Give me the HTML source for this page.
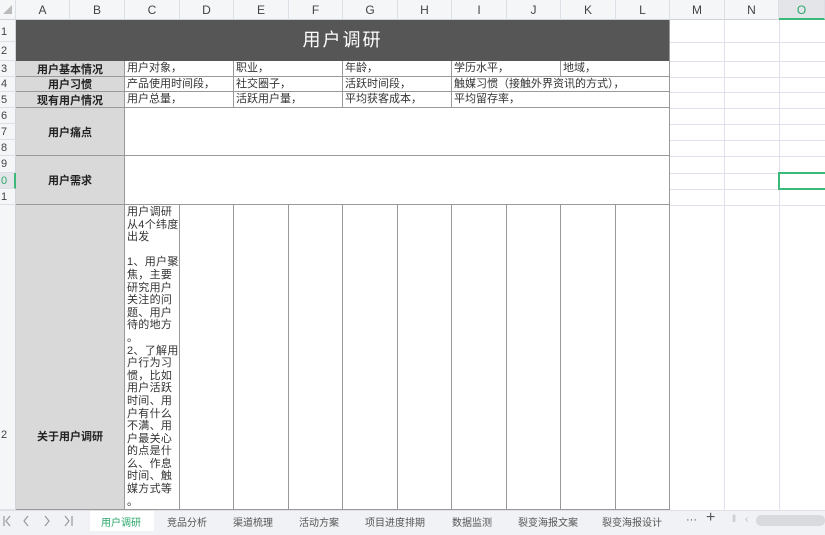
<!DOCTYPE html>
<html><head><meta charset="utf-8"><style>
*{margin:0;padding:0;box-sizing:border-box}
html,body{width:825px;height:535px;overflow:hidden}
body{background:#fff;font-family:"Liberation Sans","Noto Sans CJK SC",sans-serif;position:relative}
.a{position:absolute}
.ch{position:absolute;top:0;height:20px;background:#f5f6f8;border-right:1px solid #dcdfe6;border-bottom:1px solid #d0d3da;font-size:12px;color:#444;text-align:center;line-height:20px}
.rh{position:absolute;left:0;width:16px;background:#f5f6f8;border-bottom:1px solid #dcdfe6;border-right:1px solid #d0d3da;font-size:11px;color:#444;text-align:left;padding-left:1px}
.hl{position:absolute;height:1px;background:#dfe2ec}
.vl{position:absolute;width:1px;background:#dfe2ec}
.c{position:absolute;border-right:1px solid #999;border-bottom:1px solid #999;font-size:11px;color:#333;white-space:nowrap;overflow:hidden;padding-left:2px}
.lab{position:absolute;background:#d9d9d9;border-right:1px solid #999;border-bottom:1px solid #999;font-size:11px;font-weight:bold;color:#222;text-align:center;display:flex;align-items:center;justify-content:center}
.tab{position:absolute;top:514px;font-size:10px;color:#555}
</style></head><body>
<div class="hl" style="left:670px;top:42px;width:155px"></div>
<div class="hl" style="left:670px;top:61px;width:155px"></div>
<div class="hl" style="left:670px;top:77px;width:155px"></div>
<div class="hl" style="left:670px;top:92px;width:155px"></div>
<div class="hl" style="left:670px;top:108px;width:155px"></div>
<div class="hl" style="left:670px;top:124px;width:155px"></div>
<div class="hl" style="left:670px;top:140px;width:155px"></div>
<div class="hl" style="left:670px;top:156px;width:155px"></div>
<div class="hl" style="left:670px;top:173px;width:155px"></div>
<div class="hl" style="left:670px;top:189px;width:155px"></div>
<div class="hl" style="left:670px;top:205px;width:155px"></div>
<div class="vl" style="left:724px;top:20px;height:490px"></div>
<div class="vl" style="left:779px;top:20px;height:490px"></div>
<div class="ch" style="left:0;width:16px;color:#bbb;font-size:9px">◢</div>
<div class="ch" style="left:16px;width:54px">A</div>
<div class="ch" style="left:70px;width:55px">B</div>
<div class="ch" style="left:125px;width:55px">C</div>
<div class="ch" style="left:180px;width:54px">D</div>
<div class="ch" style="left:234px;width:55px">E</div>
<div class="ch" style="left:289px;width:54px">F</div>
<div class="ch" style="left:343px;width:55px">G</div>
<div class="ch" style="left:398px;width:54px">H</div>
<div class="ch" style="left:452px;width:55px">I</div>
<div class="ch" style="left:507px;width:54px">J</div>
<div class="ch" style="left:561px;width:55px">K</div>
<div class="ch" style="left:616px;width:54px">L</div>
<div class="ch" style="left:670px;width:55px">M</div>
<div class="ch" style="left:725px;width:54px">N</div>
<div class="ch" style="left:779px;width:46px;background:#e3e5e9;color:#2aa76a;border-bottom:2px solid #3cb878">O</div>
<div class="rh" style="top:20px;height:22px;line-height:24px">1</div>
<div class="rh" style="top:42px;height:19px;line-height:18px">2</div>
<div class="rh" style="top:61px;height:16px;line-height:16px">3</div>
<div class="rh" style="top:77px;height:15px;line-height:15px">4</div>
<div class="rh" style="top:92px;height:16px;line-height:16px">5</div>
<div class="rh" style="top:108px;height:16px;line-height:16px">6</div>
<div class="rh" style="top:124px;height:16px;line-height:16px">7</div>
<div class="rh" style="top:140px;height:16px;line-height:16px">8</div>
<div class="rh" style="top:156px;height:17px;line-height:17px">9</div>
<div class="rh" style="top:173px;height:16px;line-height:16px;color:#2aa76a;border-right:2px solid #3cb878;background:#e3e5e9">0</div>
<div class="rh" style="top:189px;height:16px;line-height:16px">1</div>
<div class="rh" style="top:205px;height:305px;line-height:460px">2</div>
<div class="a" style="left:16px;top:20px;width:654px;height:41px;background:#565656;border-right:1px solid #999;color:#fff;font-size:18px;text-align:center;line-height:41px;letter-spacing:2px">用户调研</div>
<div class="lab" style="left:16px;top:61px;width:109px;height:16px">用户基本情况</div>
<div class="lab" style="left:16px;top:77px;width:109px;height:15px">用户习惯</div>
<div class="lab" style="left:16px;top:92px;width:109px;height:16px">现有用户情况</div>
<div class="lab" style="left:16px;top:108px;width:109px;height:48px">用户痛点</div>
<div class="lab" style="left:16px;top:156px;width:109px;height:49px">用户需求</div>
<div class="lab" style="left:16px;top:205px;width:109px;height:305px;align-items:flex-start;padding-top:223px">关于用户调研</div>
<div class="c" style="left:125px;top:61px;width:109px;height:16px;line-height:15px">用户对象，</div>
<div class="c" style="left:234px;top:61px;width:109px;height:16px;line-height:15px">职业，</div>
<div class="c" style="left:343px;top:61px;width:109px;height:16px;line-height:15px">年龄，</div>
<div class="c" style="left:452px;top:61px;width:109px;height:16px;line-height:15px">学历水平，</div>
<div class="c" style="left:561px;top:61px;width:109px;height:16px;line-height:15px">地域，</div>
<div class="c" style="left:125px;top:77px;width:109px;height:15px;line-height:14px">产品使用时间段，</div>
<div class="c" style="left:234px;top:77px;width:109px;height:15px;line-height:14px">社交圈子，</div>
<div class="c" style="left:343px;top:77px;width:109px;height:15px;line-height:14px">活跃时间段，</div>
<div class="c" style="left:452px;top:77px;width:218px;height:15px;line-height:14px">触媒习惯（接触外界资讯的方式），</div>
<div class="c" style="left:125px;top:92px;width:109px;height:16px;line-height:15px">用户总量，</div>
<div class="c" style="left:234px;top:92px;width:109px;height:16px;line-height:15px">活跃用户量，</div>
<div class="c" style="left:343px;top:92px;width:109px;height:16px;line-height:15px">平均获客成本，</div>
<div class="c" style="left:452px;top:92px;width:218px;height:16px;line-height:15px">平均留存率，</div>
<div class="c" style="left:125px;top:108px;width:545px;height:48px"></div>
<div class="c" style="left:125px;top:156px;width:545px;height:49px"></div>
<div class="c" style="left:125px;top:205px;width:55px;height:305px;white-space:normal;line-height:12.6px;font-size:11px;padding-top:1px;letter-spacing:0.3px">用户调研<br>从4个纬度<br>出发<br><br>1、用户聚<br>焦，主要<br>研究用户<br>关注的问<br>题、用户<br>待的地方<br>。<br>2、了解用<br>户行为习<br>惯，比如<br>用户活跃<br>时间、用<br>户有什么<br>不满、用<br>户最关心<br>的点是什<br>么、作息<br>时间、触<br>媒方式等<br>。</div>
<div class="c" style="left:180px;top:205px;width:54px;height:305px"></div>
<div class="c" style="left:234px;top:205px;width:55px;height:305px"></div>
<div class="c" style="left:289px;top:205px;width:54px;height:305px"></div>
<div class="c" style="left:343px;top:205px;width:55px;height:305px"></div>
<div class="c" style="left:398px;top:205px;width:54px;height:305px"></div>
<div class="c" style="left:452px;top:205px;width:55px;height:305px"></div>
<div class="c" style="left:507px;top:205px;width:54px;height:305px"></div>
<div class="c" style="left:561px;top:205px;width:55px;height:305px"></div>
<div class="c" style="left:616px;top:205px;width:54px;height:305px"></div>
<div class="a" style="left:778px;top:172px;width:50px;height:18px;border:2px solid #3cb878"></div>
<div class="a" style="left:0;top:510px;width:825px;height:25px;background:#f1f2f5;border-top:1px solid #e0e2e6"></div>
<svg class="a" style="left:0;top:512px" width="80" height="18" viewBox="0 0 80 18" fill="none" stroke="#999" stroke-width="1.2">
<path d="M4 4v10M10 4l-4 5 4 5"/>
<path d="M28 4l-4 5 4 5"/>
<path d="M45 4l4 5-4 5"/>
<path d="M65 4l4 5-4 5M72 4v10"/>
</svg>
<div class="a" style="left:90px;top:511px;width:64px;height:20px;background:#fff"></div>
<div class="tab" style="left:101px;color:#2aa76a">用户调研</div>
<div class="tab" style="left:167px">竞品分析</div>
<div class="tab" style="left:233px">渠道梳理</div>
<div class="tab" style="left:299px">活动方案</div>
<div class="tab" style="left:365px">项目进度排期</div>
<div class="tab" style="left:452px">数据监测</div>
<div class="tab" style="left:518px">裂变海报文案</div>
<div class="tab" style="left:602px">裂变海报设计</div>
<div class="tab" style="left:686px;font-size:11px">···</div>
<div class="tab" style="left:706px;top:509px;font-size:16px">+</div>
<div class="tab" style="left:732px;color:#bbb">‖</div>
<div class="tab" style="left:745px;color:#bbb">‹</div>
<div class="a" style="left:756px;top:515px;width:69px;height:11px;background:#d8dade;border-radius:5px"></div>
</body></html>
